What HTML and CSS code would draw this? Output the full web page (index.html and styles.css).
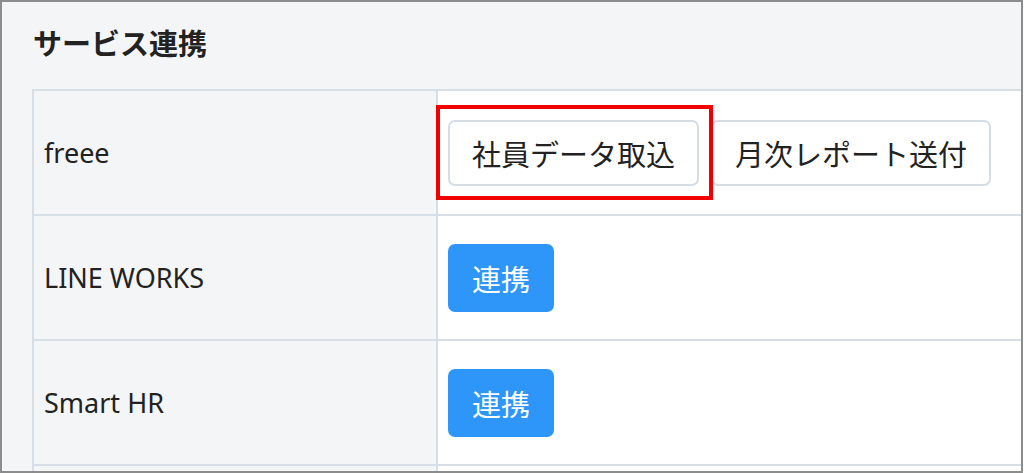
FILE: index.html
```html
<!DOCTYPE html>
<html lang="ja">
<head>
  <meta charset="UTF-8" />
  <meta name="viewport" content="width=device-width, initial-scale=1.0"/>
  <title>サービス連携</title>
  <link rel="stylesheet" href="styles.css">
</head>
<body>
  <div class="frame">
    <h2 class="title">サービス連携</h2>
    <div class="service-list">
      <div class="row">
        <div class="name">freee</div>
        <div class="actions">
          <span class="highlight">
            <button class="btn btn-outline">社員データ取込</button>
            <span class="annotation"></span>
          </span>
          <button class="btn btn-outline">月次レポート送付</button>
        </div>
      </div>
      <div class="row">
        <div class="name">LINE WORKS</div>
        <div class="actions">
          <button class="btn btn-primary">連携</button>
        </div>
      </div>
      <div class="row">
        <div class="name">Smart HR</div>
        <div class="actions">
          <button class="btn btn-primary">連携</button>
        </div>
      </div>
      <div class="row">
        <div class="name"></div>
        <div class="actions"></div>
      </div>
    </div>
  </div>
</body>
</html>
```

FILE: styles.css
```css
body {
  margin: 0;
  padding: 0;
  background: #fff;
  font-family: 'Noto Sans', 'Noto Sans CJK JP', sans-serif;
  color: #222;
}
.frame {
  box-sizing: border-box;
  width: 1023px;
  height: 473px;
  border: 2px solid #8c8c8c;
  background: #f4f5f7;
  padding: 23px 0 0 30px;
  overflow: hidden;
}
.title {
  margin: 0 0 29px 1px;
  font-family: 'Noto Sans CJK JP', sans-serif;
  font-size: 29px;
  line-height: 35px;
  font-weight: 700;
  color: #222;
}
.service-list {
  width: 1010px;
  border-left: 2px solid #d8dee6;
}
.row {
  box-sizing: border-box;
  display: flex;
  height: 125px;
  border-top: 2px solid #d8dee6;
}
.name {
  box-sizing: border-box;
  width: 402px;
  padding-left: 10px;
  display: flex;
  align-items: center;
  font-size: 27px;
  color: #222;
}
.actions {
  flex: 1;
  display: flex;
  align-items: center;
  gap: 12px;
  padding-left: 10px;
  background: #fff;
  border-left: 2px solid #d8dee6;
}
.btn {
  font-family: 'Noto Sans CJK JP', sans-serif;
  font-size: 29px;
  line-height: 44px;
  border-radius: 7px;
  cursor: pointer;
  margin: 0;
}
.btn-outline {
  padding: 9px 22px;
  background: #fff;
  color: #222;
  border: 2px solid #d6dce4;
}
.btn-primary {
  padding: 12px 24px;
  background: #2e96f8;
  color: #fff;
  border: none;
}
.highlight {
  position: relative;
  display: inline-flex;
}
.annotation {
  position: absolute;
  left: -12px;
  top: -15px;
  width: 277px;
  height: 95px;
  box-sizing: border-box;
  border: 4px solid #f20000;
  pointer-events: none;
}
```
